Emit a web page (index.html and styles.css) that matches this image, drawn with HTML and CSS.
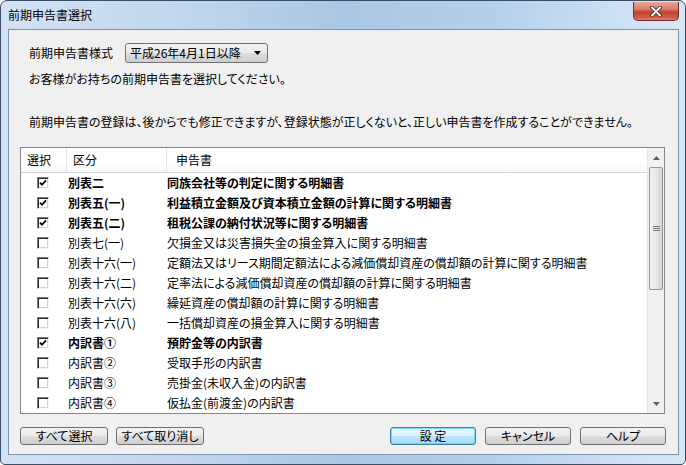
FILE: index.html
```html
<!DOCTYPE html>
<html lang="ja">
<head>
<meta charset="utf-8">
<link rel="stylesheet" href="styles.css">
</head>
<body>
<div class="window">
  <div class="titlebar">
    <span class="title">前期申告書選択</span>
    <button class="close" aria-label="閉じる">
      <svg width="14" height="11" viewBox="0 0 14 11"><path d="M3 1.5 L11 9.5 M11 1.5 L3 9.5" stroke="#4a1d17" stroke-width="3.6" stroke-linecap="round"/><path d="M3 1.5 L11 9.5 M11 1.5 L3 9.5" stroke="#ffffff" stroke-width="2" stroke-linecap="round"/></svg>
    </button>
  </div>
  <div class="client">
    <div class="form-row">
      <span class="label">前期申告書様式</span>
      <div class="select">
        <span>平成26年4月1日以降</span>
        <svg width="7" height="4" viewBox="0 0 7 4"><path d="M0 0 H7 L3.5 4 Z" fill="#000"/></svg>
      </div>
    </div>
    <p class="msg msg1">お客様がお持ちの前期申告書を選択してください。</p>
    <p class="msg msg2">前期申告書の登録は、後からでも修正できますが、登録状態が正しくないと、正しい申告書を作成することができません。</p>

    <div class="list">
      <div class="list-main">
        <div class="list-head">
          <div class="hcell hc1">選択</div>
          <div class="hcell hc2">区分</div>
          <div class="hcell hc3">申告書</div>
        </div>
        <div class="rows">
          <div class="row bold"><span class="cb on"></span><span class="k">別表二</span><span class="d">同族会社等の判定に関する明細書</span></div>
          <div class="row bold"><span class="cb on"></span><span class="k">別表五(一)</span><span class="d">利益積立金額及び資本積立金額の計算に関する明細書</span></div>
          <div class="row bold"><span class="cb on"></span><span class="k">別表五(二)</span><span class="d">租税公課の納付状況等に関する明細書</span></div>
          <div class="row"><span class="cb"></span><span class="k">別表七(一)</span><span class="d">欠損金又は災害損失金の損金算入に関する明細書</span></div>
          <div class="row"><span class="cb"></span><span class="k">別表十六(一)</span><span class="d">定額法又はリース期間定額法による減価償却資産の償却額の計算に関する明細書</span></div>
          <div class="row"><span class="cb"></span><span class="k">別表十六(二)</span><span class="d">定率法による減価償却資産の償却額の計算に関する明細書</span></div>
          <div class="row"><span class="cb"></span><span class="k">別表十六(六)</span><span class="d">繰延資産の償却額の計算に関する明細書</span></div>
          <div class="row"><span class="cb"></span><span class="k">別表十六(八)</span><span class="d">一括償却資産の損金算入に関する明細書</span></div>
          <div class="row bold"><span class="cb on"></span><span class="k">内訳書①</span><span class="d">預貯金等の内訳書</span></div>
          <div class="row"><span class="cb"></span><span class="k">内訳書②</span><span class="d">受取手形の内訳書</span></div>
          <div class="row"><span class="cb"></span><span class="k">内訳書③</span><span class="d">売掛金(未収入金)の内訳書</span></div>
          <div class="row"><span class="cb"></span><span class="k">内訳書④</span><span class="d">仮払金(前渡金)の内訳書</span></div>
        </div>
      </div>
      <div class="scrollbar">
        <div class="sb-btn"><svg width="7" height="4" viewBox="0 0 7 4"><path d="M0 4 H7 L3.5 0 Z" fill="#606060"/></svg></div>
        <div class="sb-track">
          <div class="sb-thumb">
            <svg width="7" height="6" viewBox="0 0 7 6"><path d="M0 0.5 H7 M0 2.5 H7 M0 4.5 H7" stroke="#7a7a7a" stroke-width="1"/></svg>
          </div>
        </div>
        <div class="sb-btn"><svg width="7" height="4" viewBox="0 0 7 4"><path d="M0 0 H7 L3.5 4 Z" fill="#606060"/></svg></div>
      </div>
    </div>

    <div class="buttons">
      <div class="btn-group">
        <button class="btn">すべて選択</button>
        <button class="btn">すべて取り消し</button>
      </div>
      <div class="btn-group right">
        <button class="btn default">設 定</button>
        <button class="btn">キャンセル</button>
        <button class="btn">ヘルプ</button>
      </div>
    </div>
  </div>
</div>
</body>
</html>
```

FILE: styles.css
```css
* { box-sizing: border-box; }
html, body { margin: 0; padding: 0; }
body {
  width: 686px;
  height: 465px;
  overflow: hidden;
  background: #ffffff;
  font-family: "Noto Sans CJK JP", "Noto Sans", sans-serif;
  font-size: 12px;
  color: #000;
  font-feature-settings: "palt";
}
.window {
  width: 686px;
  height: 465px;
  border: 1px solid #3b4d63;
  border-radius: 7px 7px 5px 5px;
  background:
    linear-gradient(90deg, #d2e2f3 0%, #c3d8ee 25%, #aac7e5 50%, #b5d0ec 72%, #cfe2f5 92%, #d8e7f6 100%);
  display: flex;
  flex-direction: column;
}
.titlebar {
  height: 28px;
  display: flex;
  align-items: flex-start;
  justify-content: space-between;
  padding-left: 7px;
  padding-right: 6px;
}
.title {
  margin-top: 5px;
  line-height: 18px;
  font-size: 12px;
  color: #000;
}
.close {
  margin-top: 1px;
  width: 46px;
  height: 19px;
  padding: 0;
  border: 1px solid #6e2a22;
  border-top: none;
  border-radius: 0 0 5px 5px;
  background: linear-gradient(180deg, #e7a898 0%, #d77e6c 40%, #c0432f 55%, #cf5a45 85%, #e0826f 100%);
  display: flex;
  align-items: center;
  justify-content: center;
}
.client {
  margin: 0 6px 0 7px;
  height: 426px;
  border: 1px solid #7f93ab;
  background: #f0f0f0;
  display: flex;
  flex-direction: column;
}
.form-row {
  margin-top: 13px;
  padding-left: 20px;
  display: flex;
  align-items: center;
  height: 20px;
}
.label { width: 96px; line-height: 20px; }
.select {
  width: 143px;
  height: 20px;
  border: 1px solid #707070;
  border-radius: 3px;
  background: linear-gradient(180deg, #f2f2f2 0%, #ebebeb 50%, #dddddd 51%, #cfcfcf 100%);
  display: flex;
  align-items: center;
  justify-content: space-between;
  padding: 0 6px 0 4px;
  line-height: 18px;
}
.msg {
  margin: 0;
  padding-left: 20px;
  line-height: 20px;
  white-space: nowrap;
}
.msg1 { margin-top: 6px; }
.msg2 { margin-top: 23px; }
.list {
  margin-top: 15px;
  margin-left: 11px;
  width: 645px;
  height: 267px;
  border: 1px solid #828790;
  background: #fff;
  display: flex;
}
.list-main { flex: 1; overflow: hidden; }
.list-head {
  height: 25px;
  display: grid;
  grid-template-columns: 46px 100px 1fr;
  background: linear-gradient(180deg, #ffffff 0%, #ffffff 60%, #f6f7f8 100%);
  border-bottom: 1px solid #d5d5d5;
}
.hcell {
  line-height: 24px;
  white-space: nowrap;
}
.hc1 { padding-left: 6px; border-right: 1px solid #e3e5e8; }
.hc2 { padding-left: 6px; border-right: 1px solid #e3e5e8; }
.hc3 { padding-left: 9px; }
.row {
  height: 20px;
  display: grid;
  grid-template-columns: 47px 99px 1fr;
  align-items: center;
  line-height: 20px;
  white-space: nowrap;
}
.row.bold { font-weight: bold; }
.cb {
  margin-left: 16px;
  width: 12px;
  height: 12px;
  border: 1px solid;
  border-color: #7a7a7a #f4f4f4 #f4f4f4 #7a7a7a;
  box-shadow: inset 1px 1px 0 #2a2a2a, inset -1px -1px 0 #d4d4d4;
  background: #fff;
  position: relative;
}
.cb.on::after {
  content: "";
  position: absolute;
  left: 1px;
  top: 1px;
  width: 8px;
  height: 8px;
  background: no-repeat center / 8px 8px url("data:image/svg+xml,%3Csvg xmlns='http://www.w3.org/2000/svg' viewBox='0 0 8 8'%3E%3Cpath d='M1 3.6 L3 5.8 L7 1.4' fill='none' stroke='%23000' stroke-width='1.7'/%3E%3C/svg%3E");
}
.scrollbar {
  width: 17px;
  display: flex;
  flex-direction: column;
  background: #f0f0f0;
  border-left: 1px solid #e8e8e8;
}
.sb-btn {
  height: 19px;
  display: flex;
  align-items: center;
  justify-content: center;
}
.sb-track { flex: 1; padding: 0 1px; }
.sb-thumb {
  height: 123px;
  border: 1px solid #979797;
  border-radius: 2px;
  background: linear-gradient(90deg, #f3f3f3 0%, #e8e8e8 50%, #d6d6d6 100%);
  display: flex;
  align-items: center;
  justify-content: center;
}
.buttons {
  margin-top: 13px;
  padding-left: 11px;
  padding-right: 12px;
  display: flex;
  justify-content: space-between;
}
.btn-group { display: flex; gap: 8px; }
.btn-group.right { gap: 9px; }
.btn {
  height: 18px;
  padding: 0;
  font-family: inherit;
  font-size: 12px;
  line-height: 16px;
  color: #000;
  border: 1px solid #707070;
  border-radius: 3px;
  background: linear-gradient(180deg, #f2f2f2 0%, #ebebeb 50%, #dddddd 51%, #cfcfcf 100%);
  font-feature-settings: "palt";
}
.btn-group:first-child .btn:first-child { width: 88px; }
.btn-group:first-child .btn:last-child { width: 88px; }
.btn-group.right .btn { width: 86px; }
.btn.default {
  border-color: #3c7fb1;
  background: linear-gradient(180deg, #eaf6fd 0%, #d9f0fc 50%, #bee6fd 51%, #a7d9f5 100%);
  box-shadow: inset 0 0 0 1px #48d1f8aa;
}
```
